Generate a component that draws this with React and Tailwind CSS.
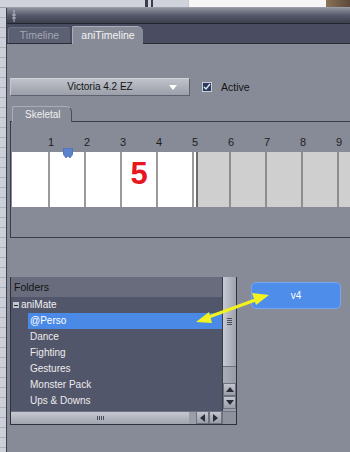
const RULER = [1, 2, 3, 4, 5, 6, 7, 8, 9]

const WHITE_CELLS = [38, 36, 36, 36, 36]
const GREY_CELLS = [33, 36, 36, 36, 36]

const FOLDERS = ['Dance', 'Fighting', 'Gestures', 'Monster Pack', 'Ups & Downs']

function Grip({ vertical }) {
  return vertical ? (
    <div className="flex flex-col gap-[1px]">
      <div className="w-[5px] h-[1px] bg-[#4a4d5a]" />
      <div className="w-[5px] h-[1px] bg-[#4a4d5a]" />
      <div className="w-[5px] h-[1px] bg-[#4a4d5a]" />
      <div className="w-[5px] h-[1px] bg-[#4a4d5a]" />
    </div>
  ) : (
    <div className="flex gap-[1px]">
      <div className="w-[1px] h-[4px] bg-[#4a4d5a]" />
      <div className="w-[1px] h-[4px] bg-[#4a4d5a]" />
      <div className="w-[1px] h-[4px] bg-[#4a4d5a]" />
      <div className="w-[1px] h-[4px] bg-[#4a4d5a]" />
    </div>
  )
}

function Tri({ dir, color = '#2a2c36' }) {
  const pts = {
    up: '0,5 4,0 8,5',
    down: '0,0 8,0 4,5',
    left: '5,0 5,8 0,4',
    right: '0,0 0,8 5,4',
  }[dir]
  const w = dir === 'up' || dir === 'down' ? 8 : 5
  const h = dir === 'up' || dir === 'down' ? 5 : 8
  return (
    <svg width={w} height={h} viewBox={`0 0 ${w} ${h}`}>
      <polygon points={pts} fill={color} />
    </svg>
  )
}

function ScrollBtn({ dir, className = '' }) {
  return (
    <div className={`shrink-0 flex items-center justify-center bg-gradient-to-b from-[#c3c6ce] to-[#9a9ea9] border border-[#6e7180] ${className}`}>
      <Tri dir={dir} />
    </div>
  )
}

export default function App() {
  return (
    <div className="relative w-[350px] h-[452px] overflow-hidden bg-[#878b97] font-['Liberation_Sans',Arial,sans-serif] text-[10px] leading-none select-none">
      {/* edge of the window behind */}
      <div className="flex h-[8px] border-b border-[#9a9dab]">
        <div className="w-[145px] bg-[#d0d3dc]" />
        <div className="w-[3px] bg-[#3b3d48]" />
        <div className="w-[3px] bg-[#d0d3dc]" />
        <div className="w-[2px] bg-[#3b3d48]" />
        <div className="w-[35px] bg-[#d0d3dc]" />
        <div className="flex-1 bg-[#f6f6f6] border-l border-[#c8c8c8]" />
        <div className="w-[24px] bg-gradient-to-r from-[#8a7258] to-[#5d4a3a]" />
      </div>

      <div className="flex h-[444px]">
        <div className="w-[7px] shrink-0 bg-[repeating-linear-gradient(180deg,#cdd0d8_0px,#cdd0d8_9px,#aeb2bd_9px,#aeb2bd_10px)] border-r border-[#3a3d4a]" />

        <div className="flex-1 min-w-0 flex flex-col">
          {/* title bar */}
          <div className="h-[16px] flex items-center pl-[4px] bg-gradient-to-b from-[#8f929e] via-[#555868] to-[#3c3f4d] border-b border-[#24262f]">
            <svg width="6" height="12" viewBox="0 0 6 12">
              <line x1="3" y1="0" x2="3" y2="12" stroke="#b8bbc6" strokeWidth="1" />
              <line x1="1" y1="5" x2="5" y2="5" stroke="#b8bbc6" strokeWidth="1" />
              <line x1="1" y1="8" x2="5" y2="8" stroke="#b8bbc6" strokeWidth="1" />
            </svg>
          </div>

          {/* tabs */}
          <div className="h-[20px] flex items-end gap-[2px] pl-[1px] bg-[#4a4d62] border-b border-[#2a2c38]">
            <div className="w-[62px] h-[16px] flex items-center justify-center rounded-t-[3px] bg-[#5c6073] border-t border-l border-[#6e7285] text-[10.5px] text-[#a3a7b4]">
              Timeline
            </div>
            <div className="w-[71px] h-[18px] -mb-[1px] flex items-center justify-center rounded-tl-[2px] rounded-tr-[6px] bg-[#878b97] border-t border-l border-[#a9adb8] text-[10.5px] text-[#f4f4f4]">
              aniTimeline
            </div>
          </div>

          {/* content */}
          <div className="flex-1 min-w-0 flex flex-col pl-[3px]">
            <div className="mt-[34px] h-[18px] flex items-center">
              <div className="w-[180px] h-[18px] shrink-0 grid grid-cols-[20px_1fr_20px] items-center bg-gradient-to-b from-[#bfc2ca] to-[#9b9fa9] border border-[#5e6170] border-t-[#cfd2d9] border-l-[#c3c6ce] text-[#151515]">
                <span />
                <span className="text-center">Victoria 4.2 EZ</span>
                <span className="flex justify-start">
                  <Tri dir="down" color="#ffffff" />
                </span>
              </div>
              <svg className="ml-[12px] shrink-0" width="10" height="10" viewBox="0 0 10 10">
                <rect x="0.5" y="0.5" width="9" height="9" fill="#2b3a5c" stroke="#c9ccd6" />
                <polyline points="2,5 4,7 8,2" fill="none" stroke="#d8e2f4" strokeWidth="1.5" />
              </svg>
              <span className="ml-[9px] text-[10.5px] text-[#151515]">Active</span>
            </div>

            {/* Skeletal tab */}
            <div className="mt-[10px] ml-[2px] w-[60px] h-[16px] -mb-[1px] z-10 flex items-center pl-[12px] rounded-tl-[2px] rounded-tr-[6px] bg-[#878b97] border-t border-l border-r border-[#a9adb8] border-r-[#4a4d5a] text-[#f0f0f0]">
              Skeletal
            </div>

            {/* timeline panel */}
            <div className="relative h-[117px] flex flex-col overflow-hidden border-t border-l border-b border-[#3a3c48]">
              <div className="h-[30px] flex items-end pb-[4px] pl-[22px] text-[11px] text-[#1e1e1e]">
                {RULER.map((n) => (
                  <div key={n} className="w-[36px] shrink-0 text-center">
                    {n}
                  </div>
                ))}
              </div>
              <div className="h-[55px] flex pl-[1px]">
                {WHITE_CELLS.map((w, i) => (
                  <div
                    key={i}
                    className="shrink-0 bg-white border-r-2 border-[#9a9a9a] flex justify-center pt-[10px]"
                    style={{ width: w }}
                  >
                    {i === 3 && (
                      <span className="text-[31px] font-bold text-[#e8161e] leading-[24px]">5</span>
                    )}
                  </div>
                ))}
                <div className="w-[2px] shrink-0 bg-white" />
                <div className="w-[2px] shrink-0 bg-[#6c6c6c]" />
                {GREY_CELLS.map((w, i) => (
                  <div
                    key={i}
                    className="shrink-0 bg-[#cfcfcf] border-r-2 border-[#8e8e8e]"
                    style={{ width: w }}
                  />
                ))}
                <div className="flex-1 bg-[#cfcfcf]" />
              </div>
              {/* playhead marker */}
              <svg className="absolute left-[52px] top-[26px]" width="10" height="11" viewBox="0 0 10 11">
                <path d="M0 0 H10 V6 L7 10 L5 8 L3 10 L0 6 Z" fill="#5a83cc" stroke="#3c5d9a" strokeWidth="0.6" />
              </svg>
            </div>

            {/* folders + v4 */}
            <div className="mt-[39px] flex items-start">
              <div className="w-[227px] shrink-0 flex flex-col border-l border-r border-b border-[#2e303a]">
                <div className="flex">
                  <div className="flex-1 h-[134px] flex flex-col bg-[#52566a]">
                    <div className="h-[20px] flex items-center pl-[3px] bg-[#686c7d] text-[10.5px] text-[#141414]">Folders</div>
                    <div className="h-[16px] flex items-center pl-[2px] text-[#f0f0f0]">
                      <span className="w-[6px] h-[6px] flex items-center justify-center bg-[#c4c6cc] mr-[2px]">
                        <span className="w-[4px] h-[1px] bg-[#2a2a2a]" />
                      </span>
                      aniMate
                    </div>
                    <div className="h-[16px] ml-[17px] flex items-center pl-[2px] bg-[#4a8ae6] text-white">@Perso</div>
                    {FOLDERS.map((f) => (
                      <div key={f} className="h-[16px] ml-[17px] flex items-center pl-[2px] text-[#ececec]">
                        {f}
                      </div>
                    ))}
                  </div>
                  <div className="w-[14px] h-[134px] flex flex-col border-l border-[#3a3c48]">
                    <div className="h-[90px] flex items-center justify-center bg-gradient-to-r from-[#c8cbd3] to-[#9ea2ad] border-b border-[#6e7180]">
                      <Grip vertical />
                    </div>
                    <div className="h-[16px] bg-gradient-to-r from-[#a9adb7] to-[#979ba6]" />
                    <ScrollBtn dir="up" className="h-[13px]" />
                    <ScrollBtn dir="down" className="h-[13px]" />
                    <div className="flex-1 bg-[#9a9ea9]" />
                  </div>
                </div>
                <div className="h-[13px] flex">
                  <div className="flex-1 flex items-center justify-center bg-gradient-to-b from-[#c6c9d1] to-[#a0a4ae] border-t border-[#6e7180]">
                    <Grip />
                  </div>
                  <div className="w-[7px] bg-[#9a9ea9] border-t border-[#6e7180]" />
                  <ScrollBtn dir="left" className="w-[13px]" />
                  <ScrollBtn dir="right" className="w-[13px]" />
                  <div className="w-[14px] bg-[#8e929d] border-t border-l border-[#6e7180]" />
                </div>
              </div>

              <div className="ml-[14px] mt-[5px] w-[90px] h-[27px] shrink-0 flex items-center justify-center rounded-[5px] bg-[#4e8dea] border border-[#78a6ee] text-white">
                v4
              </div>
            </div>
          </div>
        </div>
      </div>

      {/* yellow double arrow */}
      <svg className="absolute left-0 top-0 pointer-events-none" width="350" height="452" viewBox="0 0 350 452">
        <line x1="206" y1="318" x2="258" y2="299" stroke="#f2f21e" strokeWidth="3" />
        <polygon points="196,322 209,312 212,323" fill="#f2f21e" />
        <polygon points="269,295 252,293 256,305" fill="#f2f21e" />
      </svg>
    </div>
  )
}
